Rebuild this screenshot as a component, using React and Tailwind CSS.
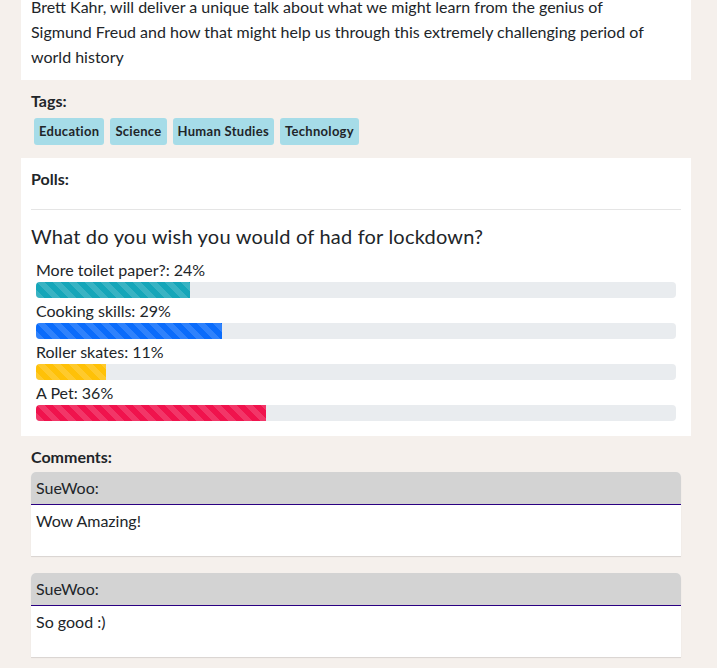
const polls = [
  { label: "More toilet paper?", pct: 24, color: "bg-[#15a6b9]" },
  { label: "Cooking skills", pct: 29, color: "bg-[#0b6cfb]" },
  { label: "Roller skates", pct: 11, color: "bg-[#ffc107]" },
  { label: "A Pet", pct: 36, color: "bg-[#f0134d]" },
];

const tags = ["Education", "Science", "Human Studies", "Technology"];

const comments = [
  { user: "SueWoo", text: "Wow Amazing!" },
  { user: "SueWoo", text: "So good :)" },
];

const stripes =
  "bg-[linear-gradient(45deg,rgba(255,255,255,0.15)_25%,transparent_25%,transparent_50%,rgba(255,255,255,0.15)_50%,rgba(255,255,255,0.15)_75%,transparent_75%,transparent)] bg-[length:16px_16px]";

const App = () => {
  return (
    <div
      className="min-h-screen bg-[#f5f0ec] text-[#212529] overflow-hidden"
      style={{ fontFamily: "Lato, 'Noto Sans', sans-serif" }}
    >
      <div className="ml-[21px] mr-[26px] bg-white px-[10px] pb-[11px] pt-[1px] -mt-[7px]">
        <p className="text-[16px] leading-[25px]">
          Brett Kahr, will deliver a unique talk about what we might learn from
          the genius of
          <br />
          Sigmund Freud and how that might help us through this extremely
          challenging period of
          <br />
          world history
        </p>
      </div>

      {/* tags */}
      <div className="ml-[21px] mr-[26px] px-[10px] pt-[9px] pb-[13px]">
        <h5 className="text-[16px] font-bold leading-6">Tags:</h5>
        <div className="flex gap-[6px] pl-[3px] mt-[5px]">
          {tags.map((t) => (
            <span
              key={t}
              className="bg-[#a6dce8] rounded-[3px] px-[5px] h-[27px] flex items-center text-[13px] font-bold tracking-[0.3px] text-[#212529]"
            >
              {t}
            </span>
          ))}
        </div>
      </div>

      {/* polls */}
      <div className="ml-[21px] mr-[26px] bg-white px-[10px] pt-[9px] pb-[15px]">
        <h5 className="text-[16px] font-bold leading-6">Polls:</h5>
        <hr className="border-t border-[#e5e5e5] mt-[18px] mb-[14px]" />
        <h4 className="text-[20px] leading-6 mb-[9px] tracking-[0.2px]">
          What do you wish you would of had for lockdown?
        </h4>
        <div className="px-[5px]">
          {polls.map((p) => (
            <div key={p.label}>
              <div className="text-[16px] leading-[25px]">
                {p.label}: {p.pct}%
              </div>
              <div className="h-4 bg-[#e9ecef] rounded-[4px] overflow-hidden">
                <div
                  className={`h-full ${p.color} ${stripes}`}
                  style={{ width: `${p.pct}%` }}
                />
              </div>
            </div>
          ))}
        </div>
      </div>

      {/* comments */}
      <div className="ml-[21px] mr-[26px] px-[10px] pt-[9px]">
        <h5 className="text-[16px] font-bold leading-6">Comments:</h5>
        <div className="flex flex-col gap-[17px] mt-[3px]">
          {comments.map((c, i) => (
            <div
              key={i}
              className="rounded-t-[5px] bg-white shadow-[0_1px_1px_rgba(0,0,0,0.12)]"
            >
              <div className="bg-[#d3d3d3] h-[33px] px-[5px] flex items-center border-b border-[#2a0082] rounded-t-[5px] text-[16px]">
                {c.user}:
              </div>
              <div className="h-[51px] px-[5px] pt-[4px] text-[16px] leading-6">
                {c.text}
              </div>
            </div>
          ))}
        </div>
      </div>
    </div>
  );
};

export default App;
